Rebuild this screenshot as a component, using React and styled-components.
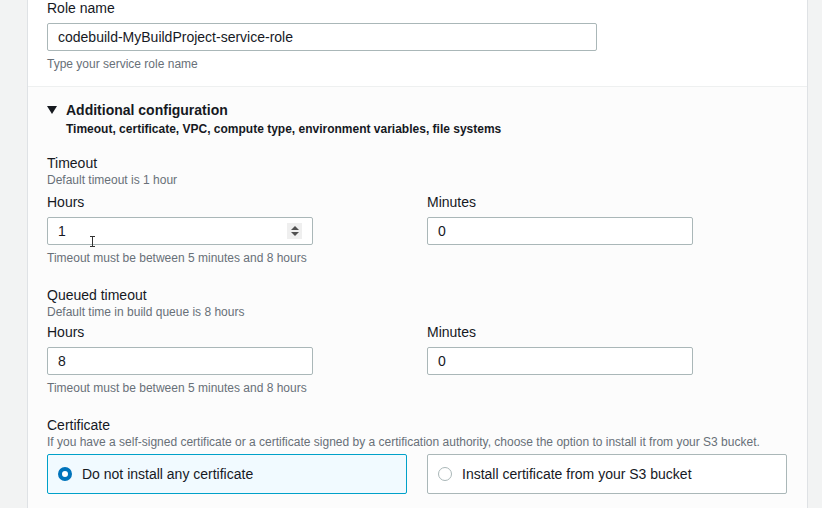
import React from 'react'
import styled, { createGlobalStyle } from 'styled-components'

const Global = createGlobalStyle`
  html, body {
    margin: 0;
    padding: 0;
    background: #f2f3f3;
    font-family: 'Liberation Sans', Arial, sans-serif;
    color: #16191f;
    overflow: hidden;
  }
`

const Page = styled.div`
  height: 510px;
  padding-left: 27px;
  padding-right: 14px;
  margin-top: -2px;
`

const Panel = styled.div`
  height: 100%;
  background: #ffffff;
  border-left: 1px solid #dfe2e5;
  border-right: 1px solid #dfe2e5;
`

const Section = styled.div`
  padding: ${p => p.$pad || '0 19px'};
  background: ${p => p.$muted ? '#fcfcfc' : '#ffffff'};
  border-top: ${p => p.$divided ? '1px solid #eef0f0' : 'none'};
`

const Label = styled.div`
  font-size: 14px;
  line-height: ${p => p.$lh || 20}px;
  color: #16191f;
  margin-top: ${p => p.$mt || 0}px;
`

const Hint = styled.div`
  font-size: 12px;
  line-height: 16px;
  color: #687078;
  margin-top: ${p => p.$mt || 0}px;
`

const Field = styled.div`
  position: relative;
  width: ${p => p.$w}px;
  height: 28px;
  box-sizing: border-box;
  margin-top: 5px;
  border: 1px solid #aab7b8;
  border-radius: 2px;
  background: #fff;
  display: flex;
  align-items: center;
  padding-left: 10px;
  font-size: 14px;
  color: #16191f;
`

const Spinner = styled.div`
  position: absolute;
  right: 10px;
  top: 5px;
  width: 15px;
  height: 16px;
  background: #efefef;
  display: flex;
  flex-direction: column;
  align-items: center;
  justify-content: center;
  gap: 2px;
`

const Arrow = styled.div`
  width: 0;
  height: 0;
  border-left: 4px solid transparent;
  border-right: 4px solid transparent;
  ${p => p.$up ? 'border-bottom: 4px solid #505050;' : 'border-top: 4px solid #505050;'}
`

const Cursor = styled.svg`
  position: absolute;
  left: 41px;
  top: 18px;
`

const Expander = styled.div`
  display: flex;
  align-items: flex-start;
  gap: 9px;
`

const Caret = styled.div`
  width: 0;
  height: 0;
  margin-top: 7px;
  border-left: 5px solid transparent;
  border-right: 5px solid transparent;
  border-top: 8px solid #16191f;
`

const Title = styled.div`
  font-size: 14px;
  font-weight: 700;
  line-height: 22px;
`

const SubTitle = styled.div`
  font-size: 12px;
  font-weight: 700;
  line-height: 16px;
  color: #16191f;
`

const Group = styled.div`
  margin-top: ${p => p.$mt || 20}px;
`

const Grid = styled.div`
  display: grid;
  grid-template-columns: 360px 360px;
  column-gap: 20px;
  margin-top: ${p => p.$mt || 0}px;
`

const Tile = styled.label`
  height: 40px;
  box-sizing: border-box;
  border: 1px solid ${p => p.$on ? '#00a1c9' : '#aab7b8'};
  background: ${p => p.$on ? '#f1faff' : '#ffffff'};
  border-radius: 2px;
  display: flex;
  align-items: center;
  gap: 10px;
  padding-left: 10px;
  font-size: 14px;
  color: #16191f;
`

const Radio = styled.span`
  width: 14px;
  height: 14px;
  box-sizing: border-box;
  border-radius: 50%;
  background: #fff;
  border: ${p => p.$on ? '4px solid #0073bb' : '1px solid #aab7b8'};
`

const NumberInput = ({ value, spin, cursor }) => (
  <Field $w={266}>
    {value}
    {spin && (
      <Spinner>
        <Arrow $up />
        <Arrow />
      </Spinner>
    )}
    {cursor && (
      <Cursor width="7" height="11" viewBox="0 0 7 11">
        <path d="M1 0.5h5M3.5 0.5v10M1 10.5h5" stroke="#333" strokeWidth="1" fill="none" />
      </Cursor>
    )}
  </Field>
)

const TimeGroup = ({ title, desc, hours, mt, gap, spin }) => (
  <Group $mt={mt}>
    <Label $lh={18}>{title}</Label>
    <Hint>{desc}</Hint>
    <Grid>
      <div>
        <Label $mt={gap}>Hours</Label>
        <NumberInput value={hours} spin={spin} cursor={spin} />
      </div>
      <div>
        <Label $mt={gap}>Minutes</Label>
        <NumberInput value="0" />
      </div>
    </Grid>
    <Hint $mt={5}>Timeout must be between 5 minutes and 8 hours</Hint>
  </Group>
)

const App = () => (
  <Page>
    <Global />
    <Panel>
      <Section $pad="0 19px 14px">
        <Label>Role name</Label>
        <Field $w={550}>codebuild-MyBuildProject-service-role</Field>
        <Hint $mt={5}>Type your service role name</Hint>
      </Section>
      <Section $divided $muted $pad="12px 19px 40px">
        <Expander>
          <Caret />
          <div>
            <Title>Additional configuration</Title>
            <SubTitle>Timeout, certificate, VPC, compute type, environment variables, file systems</SubTitle>
          </div>
        </Expander>
        <TimeGroup
          mt={17}
          gap={4}
          title="Timeout"
          desc="Default timeout is 1 hour"
          hours="1"
          spin
        />
        <TimeGroup
          mt={20}
          gap={2}
          title="Queued timeout"
          desc="Default time in build queue is 8 hours"
          hours="8"
        />
        <Group $mt={20}>
          <Label $lh={18}>Certificate</Label>
          <Hint>If you have a self-signed certificate or a certificate signed by a certification authority, choose the option to install it from your S3 bucket.</Hint>
          <Grid $mt={4}>
            <Tile $on>
              <Radio $on />
              Do not install any certificate
            </Tile>
            <Tile>
              <Radio />
              Install certificate from your S3 bucket
            </Tile>
          </Grid>
        </Group>
      </Section>
    </Panel>
  </Page>
)

export default App
